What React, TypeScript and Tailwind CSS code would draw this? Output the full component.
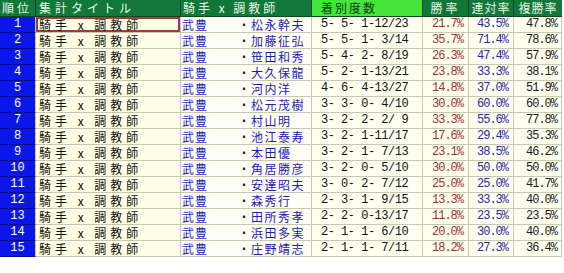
import React from 'react';

type Row = {
  rank: number;
  trainer: string;
  record: string;
  win: string;
  quinella: string;
  place: string;
};

const rows: Row[] = [
  { rank: 1, trainer: '松永幹夫', record: '5- 5- 1-12/23', win: '21.7%', quinella: '43.5%', place: '47.8%' },
  { rank: 2, trainer: '加藤征弘', record: '5- 5- 1- 3/14', win: '35.7%', quinella: '71.4%', place: '78.6%' },
  { rank: 3, trainer: '笹田和秀', record: '5- 4- 2- 8/19', win: '26.3%', quinella: '47.4%', place: '57.9%' },
  { rank: 4, trainer: '大久保龍', record: '5- 2- 1-13/21', win: '23.8%', quinella: '33.3%', place: '38.1%' },
  { rank: 5, trainer: '河内洋', record: '4- 6- 4-13/27', win: '14.8%', quinella: '37.0%', place: '51.9%' },
  { rank: 6, trainer: '松元茂樹', record: '3- 3- 0- 4/10', win: '30.0%', quinella: '60.0%', place: '60.0%' },
  { rank: 7, trainer: '村山明', record: '3- 2- 2- 2/ 9', win: '33.3%', quinella: '55.6%', place: '77.8%' },
  { rank: 8, trainer: '池江泰寿', record: '3- 2- 1-11/17', win: '17.6%', quinella: '29.4%', place: '35.3%' },
  { rank: 9, trainer: '本田優', record: '3- 2- 1- 7/13', win: '23.1%', quinella: '38.5%', place: '46.2%' },
  { rank: 10, trainer: '角居勝彦', record: '3- 2- 0- 5/10', win: '30.0%', quinella: '50.0%', place: '50.0%' },
  { rank: 11, trainer: '安達昭夫', record: '3- 0- 2- 7/12', win: '25.0%', quinella: '25.0%', place: '41.7%' },
  { rank: 12, trainer: '森秀行', record: '2- 3- 1- 9/15', win: '13.3%', quinella: '33.3%', place: '40.0%' },
  { rank: 13, trainer: '田所秀孝', record: '2- 2- 0-13/17', win: '11.8%', quinella: '23.5%', place: '23.5%' },
  { rank: 14, trainer: '浜田多実', record: '2- 1- 1- 6/10', win: '20.0%', quinella: '30.0%', place: '40.0%' },
  { rank: 15, trainer: '庄野靖志', record: '2- 1- 1- 7/11', win: '18.2%', quinella: '27.3%', place: '36.4%' },
];

const jp = "font-['Noto_Sans_CJK_JP','Noto_Sans',sans-serif]";
const mono = "font-['Liberation_Mono',monospace]";

const App: React.FC = () => {
  return (
    <div className="w-[564px] h-[273px] bg-white overflow-hidden">
      <div className="w-[562px]">
        {/* header */}
        <div className={`flex h-[17px] text-[12px] leading-[16px] ${jp}`}>
          <div className="w-[36px] bg-[#12783a] text-[#e4f7e4] border-r border-b border-[#0a4a22] pl-[2px] tracking-[3px]">順位</div>
          <div className="w-[145px] bg-[#12783a] text-[#e4f7e4] border-r border-b border-[#0a4a22] pl-[3px] tracking-[4px]">集計タイトル</div>
          <div className="w-[131px] bg-[#12783a] text-[#e4f7e4] border-r border-b border-[#0a4a22] pl-[2px] tracking-[3px] whitespace-pre">騎手 x 調教師</div>
          <div className="w-[111px] bg-[#44e63c] text-[#0c3a10] border-r border-b border-[#0a4a22] pl-[9px] tracking-[2px]">着別度数</div>
          <div className="w-[46px] bg-[#12783a] text-[#e4f7e4] border-r border-b border-[#0a4a22] text-center tracking-[3px]">勝率</div>
          <div className="w-[45px] bg-[#12783a] text-[#e4f7e4] border-r border-b border-[#0a4a22] text-center tracking-[1px]">連対率</div>
          <div className="w-[48px] bg-[#12783a] text-[#e4f7e4] border-b border-[#0a4a22] text-center tracking-[1px]">複勝率</div>
        </div>

        {rows.map((r) => (
          <div key={r.rank} className="flex h-[16px] text-[12px] leading-[15px]">
            <div className={`w-[36px] bg-[#0c16e8] text-white border-r border-b border-r-[#c8c8e8] border-b-[#0a0a90] text-center ${mono}`}>
              {r.rank}
            </div>
            <div
              className={`w-[145px] bg-[#ffffe6] text-[#111] border-r border-b border-[#c8c8b4] pl-[3px] tracking-[4px] whitespace-pre ${jp} ${
                r.rank === 1 ? 'shadow-[inset_0_0_0_2px_#9c3c3c]' : ''
              }`}
            >
              騎手 x 調教師
            </div>
            <div className={`w-[131px] flex bg-[#fffff8] text-[#1c1cb0] border-r border-b border-[#c8c8b4] pl-[1px] ${jp}`}>
              <span className="w-[55px] shrink-0 tracking-[1px]">武豊</span>
              <span className="w-[14px] shrink-0 text-center text-[#222]">・</span>
              <span className="whitespace-nowrap overflow-hidden tracking-[1.5px]">{r.trainer}</span>
            </div>
            <div className={`w-[111px] bg-[#fffff0] text-[#111] border-r border-b border-[#c8c8b4] pl-[9px] tracking-[-0.5px] whitespace-pre ${mono}`}>
              {r.record}
            </div>
            <div className={`w-[46px] bg-[#fffff0] text-[#9a3426] border-r border-b border-[#c8c8b4] text-right pr-[5px] tracking-[-1px] ${mono}`}>
              {r.win}
            </div>
            <div className={`w-[45px] bg-[#fffff0] text-[#2828b0] border-r border-b border-[#c8c8b4] text-right pr-[5px] tracking-[-1px] ${mono}`}>
              {r.quinella}
            </div>
            <div className={`w-[48px] bg-[#fffff0] text-[#1a1a1a] border-b border-r border-[#c8c8b4] text-right pr-[4px] tracking-[-1px] ${mono}`}>
              {r.place}
            </div>
          </div>
        ))}
      </div>
    </div>
  );
};

export default App;
